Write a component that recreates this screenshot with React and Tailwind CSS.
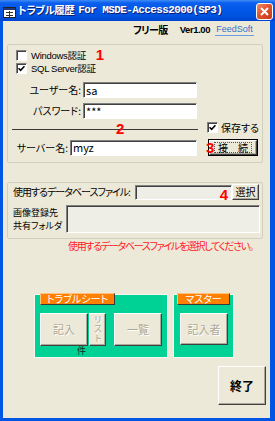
import React from "react";

const face = "bg-[#ECE9D8]";

function Check({ on }) {
  return (
    <span className="w-[11px] h-[11px] shrink-0 flex items-center justify-center bg-white border border-t-[#808080] border-l-[#808080] border-r-white border-b-white shadow-[inset_1px_1px_0_#404040]">
      {on && (
        <svg width="7" height="7" viewBox="0 0 7 7">
          <path d="M0.5 3.2 L2.6 5.3 L6.5 1.2" fill="none" stroke="#000" strokeWidth="1.6" />
        </svg>
      )}
    </span>
  );
}

function Field({ className, children }) {
  return (
    <div
      className={`${className} shrink-0 flex items-center pl-[2px] border border-t-[#808080] border-l-[#808080] border-r-white border-b-white shadow-[inset_1px_1px_0_#404040] text-[11px] leading-none`}
    >
      {children}
    </div>
  );
}

function Btn({ className, children, disabled }) {
  return (
    <div
      className={`${className} ${face} shrink-0 flex items-center justify-center border border-t-white border-l-white border-r-[#404040] border-b-[#404040] shadow-[inset_-1px_-1px_0_#ACA899] ${
        disabled ? "text-[#ACA899] [text-shadow:1px_1px_0_#fff]" : "text-black"
      }`}
    >
      {children}
    </div>
  );
}

function Tab({ className, children }) {
  return (
    <div
      className={`${className} absolute top-[-2px] h-[12px] bg-[#FF8000] border border-t-[#FFC080] border-l-[#FFC080] border-r-[#3a3a3a] border-b-[#3a3a3a] text-white text-[10px] leading-[10px] flex items-center justify-center`}
    >
      {children}
    </div>
  );
}

function Num({ className, children }) {
  return (
    <span className={`${className} text-[#FF0000] font-bold text-[15px] leading-none [font-family:'Liberation_Sans',sans-serif]`}>
      {children}
    </span>
  );
}

export default function App() {
  return (
    <div className="w-[275px] h-[421px] flex flex-col bg-[#0055E5] overflow-hidden whitespace-nowrap text-[10px] text-black [font-family:'Noto_Sans_CJK_JP',sans-serif] [font-feature-settings:'palt']">
      {/* title bar */}
      <div className="h-[21px] shrink-0 flex items-center pl-[3px] pr-[2px] bg-[linear-gradient(to_bottom,#3d8cf6_0%,#0c5fee_14%,#0056e6_50%,#0052de_80%,#0042cf_100%)]">
        <svg width="13" height="11" viewBox="0 0 13 11" className="mt-[3px] shrink-0">
          <rect x="0.5" y="0.5" width="12" height="10" fill="#fff" stroke="#222" />
          <rect x="1" y="1" width="11" height="2" fill="#23367a" />
          <path d="M3 5.5h7M3 8.5h7M6.5 4v6" stroke="#333" />
        </svg>
        <span className="ml-[2px] text-white font-bold text-[10.5px] leading-none tracking-[-0.5px] [text-shadow:1px_1px_0_#0a1e6e]">トラブル履歴</span>
        <span className="ml-[4px] text-white font-bold text-[11px] leading-none tracking-[-0.6px] [font-family:'Liberation_Mono',monospace] [text-shadow:1px_1px_0_#0a1e6e]">
          For MSDE-Access2000(SP3)
        </span>
        <div className="ml-auto mt-[1px] shrink-0 w-[17px] h-[17px] rounded-[3px] border border-white bg-[linear-gradient(135deg,#f08a68_0%,#e0542e_45%,#c83a18_100%)] flex items-center justify-center">
          <svg width="9" height="9" viewBox="0 0 9 9">
            <path d="M1 1 L8 8 M8 1 L1 8" stroke="#fff" strokeWidth="2" />
          </svg>
        </div>
      </div>

      {/* client */}
      <div className={`flex-1 ml-[3px] mr-[5px] mb-[3px] ${face} flex flex-col`}>
        {/* version row */}
        <div className="h-[18px] shrink-0 flex items-center pl-[130px]">
          <span className="font-bold text-[10px] tracking-[-0.6px] leading-none">フリー版</span>
          <span className="ml-[12px] font-bold text-[9.5px] tracking-[-0.4px] leading-none [font-family:'Liberation_Sans',sans-serif]">Ver1.00</span>
          <span className="ml-[5px] text-[9px] leading-none text-[#3a6fc8] border-b border-[#6c9ee8] px-[1px] pb-[1px] [font-family:'Liberation_Sans',sans-serif]">
            FeedSoft
          </span>
        </div>

        {/* group 1 */}
        <div className="mt-[5px] ml-[4px] w-[256px] h-[119px] border border-[#D0D0BF] rounded-[2px] flex flex-col">
          <div className="mt-[4px] h-[13px] flex items-center pl-[8px]">
            <Check />
            <span className="ml-[4px] leading-[10px] text-[9.5px] tracking-[-0.3px] [font-family:'Liberation_Sans','Noto_Sans_CJK_JP',sans-serif]">Windows認証</span>
            <Num className="ml-[10px] mt-[-3px]">1</Num>
          </div>
          <div className="h-[13px] flex items-center pl-[8px]">
            <Check on />
            <span className="ml-[4px] leading-[10px] text-[9.5px] tracking-[-0.3px] [font-family:'Liberation_Sans','Noto_Sans_CJK_JP',sans-serif]">SQL Server認証</span>
          </div>
          <div className="mt-[7px] h-[16px] flex items-center">
            <span className="w-[75px] shrink-0 text-right pr-[2px] leading-none">ユーザー名:</span>
            <Field className="w-[114px] h-[16px] bg-white">sa</Field>
          </div>
          <div className="mt-[5px] h-[16px] flex items-center">
            <span className="w-[75px] shrink-0 text-right pr-[2px] leading-none">パスワード:</span>
            <Field className="w-[114px] h-[16px] bg-white">***</Field>
          </div>
          <div className="relative h-[20px] flex items-start">
            <div className="ml-[4px] mt-[10px] w-[186px] h-px shrink-0 bg-[#3a3a3a]" />
            <Num className="absolute left-[108px] top-[2px]">2</Num>
            <div className="ml-[9px] mt-[3px] flex items-center">
              <Check on />
              <span className="ml-[3px] leading-none">保存する</span>
            </div>
          </div>
          <div className="h-[17px] flex items-center">
            <span className="w-[62px] shrink-0 text-right pr-[2px] leading-none">サーバー名:</span>
            <Field className="w-[127px] h-[16px] bg-white">myz</Field>
            <div className="relative ml-[11px] w-[50px] h-[17px] shrink-0 border border-black">
              <Btn className="w-full h-full">
                <span className="px-[3px] border border-dotted border-[#555] leading-[9px] text-[10px]">接　続</span>
              </Btn>
              <Num className="absolute left-[-3px] top-[0px]">3</Num>
            </div>
          </div>
        </div>

        {/* group 2 */}
        <div className="mt-[19px] ml-[4px] w-[256px] h-[57px] border border-[#D0D0BF] rounded-[2px] flex flex-col">
          <div className="mt-[1px] h-[16px] flex items-center">
            <span className="w-[127px] shrink-0 pl-[5px] leading-none tracking-[-1px]">使用するデータベースファイル:</span>
            <Field className="relative w-[97px] h-[15px] bg-[#EEEDE6]">
              <Num className="absolute right-[3px] top-[1px]">4</Num>
            </Field>
            <Btn className="w-[27px] h-[16px] leading-none">選択</Btn>
          </div>
          <div className="mt-[5px] flex">
            <div className="w-[58px] shrink-0 pl-[5px] pt-[1px] text-[9px] leading-[13px]">
              <div>画像登録先</div>
              <div>共有フォルダ</div>
            </div>
            <Field className="w-[194px] h-[28px] bg-[#EEEDE6]" />
          </div>
        </div>

        <div className="mt-[1px] pl-[65px] text-[#FF2020] text-[10px] tracking-[-1.3px] leading-[12px]">
          使用するデータベースファイルを選択してください。
        </div>

        {/* bottom groups */}
        <div className="mt-[42px] pl-[31px] flex gap-[5px]">
          <div className="relative w-[134px] h-[64px] border border-[#F8F7F2]">
            <div className="h-full bg-[#00D296] pt-[18px] pl-[5px]">
              <div className="flex">
                <Btn disabled className="w-[48px] h-[33px] text-[11px]">記入</Btn>
                <Btn disabled className="ml-[1px] w-[17px] h-[33px] text-[9px]">
                  <span className="[writing-mode:vertical-rl] leading-[10px] tracking-[0.5px]">リスト</span>
                </Btn>
                <Btn disabled className="ml-[8px] w-[48px] h-[33px] text-[11px]">一覧</Btn>
              </div>
              <div className="ml-[37px] text-[9px] leading-[10px] text-[#222]">件</div>
            </div>
            <Tab className="left-[5px] w-[75px]">トラブルシート</Tab>
          </div>
          <div className="relative w-[61px] h-[64px] border border-[#F8F7F2]">
            <div className="h-full bg-[#00D296] pt-[18px] pl-[6px]">
              <Btn disabled className="w-[48px] h-[32px] text-[11px]">記入者</Btn>
            </div>
            <Tab className="left-[3px] w-[53px]">マスター</Tab>
          </div>
        </div>

        <div className="mt-[8px] self-end mr-[4px]">
          <Btn className="w-[48px] h-[39px] font-bold text-[12px]">終了</Btn>
        </div>
      </div>
    </div>
  );
}
